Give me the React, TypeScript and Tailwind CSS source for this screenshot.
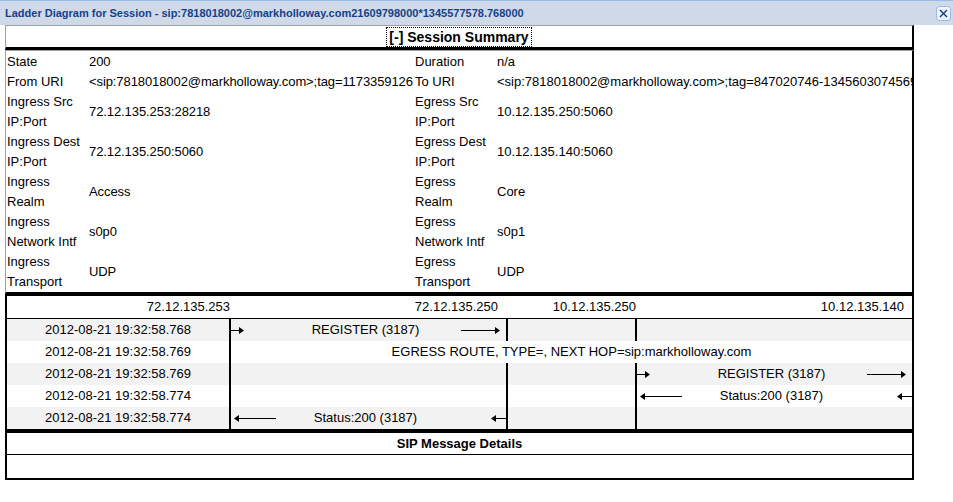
import React from "react";

// Session summary rows: label / value pairs for ingress and egress sides
interface SummaryRow {
    l1: string;
    v1: string;
    l2: string;
    v2: string;
}

const summaryRows: SummaryRow[] = [
    { l1: "State", v1: "200", l2: "Duration", v2: "n/a" },
    {
        l1: "From URI",
        v1: "<sip:7818018002@markholloway.com>;tag=1173359126",
        l2: "To URI",
        v2: "<sip:7818018002@markholloway.com>;tag=847020746-1345603074569"
    },
    { l1: "Ingress Src IP:Port", v1: "72.12.135.253:28218", l2: "Egress Src IP:Port", v2: "10.12.135.250:5060" },
    { l1: "Ingress Dest IP:Port", v1: "72.12.135.250:5060", l2: "Egress Dest IP:Port", v2: "10.12.135.140:5060" },
    { l1: "Ingress Realm", v1: "Access", l2: "Egress Realm", v2: "Core" },
    { l1: "Ingress Network Intf", v1: "s0p0", l2: "Egress Network Intf", v2: "s0p1" },
    { l1: "Ingress Transport", v1: "UDP", l2: "Egress Transport", v2: "UDP" }
];

// Simple line + arrowhead drawing
const Arrow = ({ width, dir }: { width: number; dir: "left" | "right" }) => (
    <svg width={width} height={9} className="block shrink-0">
        {dir === "right" ? (
            <>
                <line x1={0} y1={4.5} x2={width - 4} y2={4.5} stroke="#000" strokeWidth={1} />
                <polygon points={`${width - 5},1 ${width},4.5 ${width - 5},8`} fill="#000" />
            </>
        ) : (
            <>
                <line x1={4} y1={4.5} x2={width} y2={4.5} stroke="#000" strokeWidth={1} />
                <polygon points={`5,1 0,4.5 5,8`} fill="#000" />
            </>
        )}
    </svg>
);

// One message cell: short piece at one edge, label centred, long piece near the other
const Message = ({ label, dir }: { label: string; dir: "left" | "right" }) => (
    <div className="flex h-full items-center">
        {dir === "right" ? (
            <>
                <div className="flex w-[64px] justify-start">
                    <Arrow width={13} dir="right" />
                </div>
                <div className="flex-1 text-center whitespace-nowrap">{label}</div>
                <div className="flex w-[70px] justify-end pr-[6px]">
                    <Arrow width={39} dir="right" />
                </div>
            </>
        ) : (
            <>
                <div className="flex w-[64px] justify-start pl-[3px]">
                    <Arrow width={42} dir="left" />
                </div>
                <div className="flex-1 text-center whitespace-nowrap">{label}</div>
                <div className="flex w-[70px] justify-end">
                    <Arrow width={15} dir="left" />
                </div>
            </>
        )}
    </div>
);

const App = () => {
    return (
        <div className="w-[953px] h-[502px] bg-white text-[13px] text-black font-['Liberation_Sans',Arial,sans-serif] overflow-hidden">
            {/* Window title bar */}
            <div className="flex h-[25px] items-center justify-between border-t border-[#99bbe8] bg-[#cfd9e7] pl-[5px] pr-[2px]">
                <span className="text-[11px] font-bold text-[#15428b] leading-none">
                    Ladder Diagram for Session - sip:7818018002@markholloway.com21609798000*1345577578.768000
                </span>
                <svg width={15} height={15} className="block">
                    <rect x={0.5} y={0.5} width={14} height={14} rx={2.5} fill="#eef3fa" stroke="#99bbe8" />
                    <line x1={4} y1={4} x2={11} y2={11} stroke="#15428b" strokeWidth={1.5} />
                    <line x1={11} y1={4} x2={4} y2={11} stroke="#15428b" strokeWidth={1.5} />
                </svg>
            </div>

            <div className="ml-[5px] w-[909px]">
                {/* Session summary header */}
                <div className="flex h-[25px] items-center justify-center border-t border-l border-t-[#a0a0a0] border-l-[#a0a0a0] border-r-2 border-r-black border-b-[3px] border-b-black">
                    <span className="px-[2px] text-[14px] font-bold leading-[18px] outline-1 outline-dotted outline-black">
                        [-] Session Summary
                    </span>
                </div>

                {/* Session summary table */}
                <div className="border-t border-l border-t-[#a0a0a0] border-l-[#a0a0a0] border-r-2 border-r-black border-b-2 border-b-black pt-[1px]">
                    {summaryRows.map(row => (
                        <div key={row.l1} className="grid grid-cols-[83px_326px_82px_1fr] leading-[20px]">
                            <div className="pl-[1px] pr-[4px]">{row.l1}</div>
                            <div className="self-center whitespace-nowrap tracking-[-0.09px]">{row.v1}</div>
                            <div className="pr-[4px]">{row.l2}</div>
                            <div className="self-center whitespace-nowrap overflow-hidden">{row.v2}</div>
                        </div>
                    ))}
                </div>

                {/* Ladder diagram */}
                <div className="border-2 border-black">
                    <div className="flex h-[23px] items-center border-b border-black">
                        <div className="w-[223px] text-right">72.12.135.253</div>
                        <div className="w-[277px] text-right pr-[9px]">72.12.135.250</div>
                        <div className="w-[129px] text-right">10.12.135.250</div>
                        <div className="flex-1 text-right pr-[8px]">10.12.135.140</div>
                    </div>

                    <div className="flex h-[22px] bg-[#f2f2f2]">
                        <div className="flex w-[224px] items-center justify-center border-r-2 border-black">2012-08-21 19:32:58.768</div>
                        <div className="w-[277px] border-r-2 border-black">
                            <Message label="REGISTER (3187)" dir="right" />
                        </div>
                        <div className="w-[129px] border-r-2 border-black" />
                        <div className="flex-1" />
                    </div>

                    <div className="flex h-[22px]">
                        <div className="flex w-[224px] items-center justify-center border-r-2 border-black">2012-08-21 19:32:58.769</div>
                        <div className="flex flex-1 items-center justify-center whitespace-nowrap">
                            EGRESS ROUTE, TYPE=, NEXT HOP=sip:markholloway.com
                        </div>
                    </div>

                    <div className="flex h-[22px] bg-[#f2f2f2]">
                        <div className="flex w-[224px] items-center justify-center border-r-2 border-black">2012-08-21 19:32:58.769</div>
                        <div className="w-[277px] border-r-2 border-black" />
                        <div className="w-[129px] border-r-2 border-black" />
                        <div className="flex-1">
                            <Message label="REGISTER (3187)" dir="right" />
                        </div>
                    </div>

                    <div className="flex h-[22px]">
                        <div className="flex w-[224px] items-center justify-center border-r-2 border-black">2012-08-21 19:32:58.774</div>
                        <div className="w-[277px] border-r-2 border-black" />
                        <div className="w-[129px] border-r-2 border-black" />
                        <div className="flex-1">
                            <Message label="Status:200 (3187)" dir="left" />
                        </div>
                    </div>

                    <div className="flex h-[22px] bg-[#f2f2f2]">
                        <div className="flex w-[224px] items-center justify-center border-r-2 border-black">2012-08-21 19:32:58.774</div>
                        <div className="w-[277px] border-r-2 border-black">
                            <Message label="Status:200 (3187)" dir="left" />
                        </div>
                        <div className="w-[129px] border-r-2 border-black" />
                        <div className="flex-1" />
                    </div>
                </div>

                {/* SIP message details */}
                <div className="border-2 border-black">
                    <div className="flex h-[22px] items-center justify-center border-b border-black font-bold">
                        SIP Message Details
                    </div>
                    <div className="h-[23px]" />
                </div>
            </div>
        </div>
    );
};

export default App;
